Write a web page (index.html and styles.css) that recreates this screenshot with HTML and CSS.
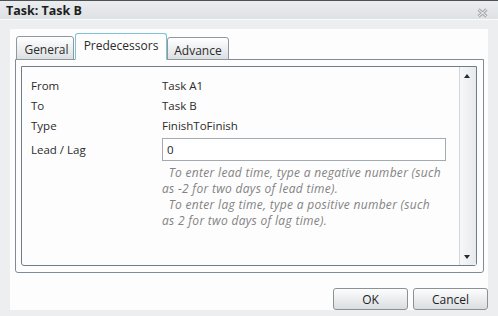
FILE: index.html
```html
<!DOCTYPE html>
<html lang="en">
<head>
    <meta charset="UTF-8">
    <title>Task: Task B</title>
    <link rel="stylesheet" href="styles.css">
</head>
<body>
    <div class="dialog">
        <div class="titlebar">
            <span class="title">Task: Task B</span>
            <svg class="close" width="11" height="10" viewBox="0 0 11 10">
                <path d="M1.5 1.5 L9.5 8.5 M9.5 1.5 L1.5 8.5" stroke="#a9adb1" stroke-width="3" fill="none"/>
                <path d="M1.5 1.5 L9.5 8.5 M9.5 1.5 L1.5 8.5" stroke="#f4f5f6" stroke-width="1" fill="none"/>
            </svg>
        </div>
        <div class="content">
            <div class="panel">
                <div class="tabs">
                    <div class="tab tab-general">General</div>
                    <div class="tab tab-active">Predecessors</div>
                    <div class="tab tab-advance">Advance</div>
                </div>
                <div class="tabpanel">
                    <div class="scrollbox">
                        <div class="fields">
                            <div class="row">
                                <span class="label">From</span>
                                <span class="value">Task A1</span>
                            </div>
                            <div class="row">
                                <span class="label">To</span>
                                <span class="value">Task B</span>
                            </div>
                            <div class="row">
                                <span class="label">Type</span>
                                <span class="value">FinishToFinish</span>
                            </div>
                            <div class="row row-input">
                                <span class="label">Lead / Lag</span>
                                <input class="lag-input" type="text" value="0">
                            </div>
                            <div class="hint">
                                &nbsp;&nbsp;To enter lead time, type a negative number (such<br>
                                as -2 for two days of lead time).<br>
                                &nbsp;&nbsp;To enter lag time, type a positive number (such<br>
                                as 2 for two days of lag time).
                            </div>
                        </div>
                        <div class="scrollbar">
                            <span class="arrow arrow-up"></span>
                            <span class="arrow arrow-down"></span>
                        </div>
                    </div>
                </div>
                <div class="actions">
                    <button class="btn">OK</button>
                    <button class="btn">Cancel</button>
                </div>
            </div>
        </div>
    </div>
</body>
</html>
```

FILE: styles.css
```css
body {
    margin: 0;
    font-family: "Segoe UI", "Open Sans", sans-serif;
    font-size: 11.5px;
    color: #2b2b2b;
}
.dialog {
    width: 498px;
    height: 316px;
    background: #eceef0;
    border-top: 1px solid #4e5256;
    box-sizing: border-box;
}
.titlebar {
    height: 17px;
    display: flex;
    align-items: center;
    justify-content: space-between;
    padding: 1px 10px 0 6px;
    background: linear-gradient(#eaecee, #dfe2e5);
    border-bottom: 1px solid #fbfbfc;
}
.title {
    font-weight: bold;
    font-size: 12.5px;
    color: #1e1e1e;
}
.close {
    margin-top: 5px;
}
.content {
    padding: 9px 10px 0 10px;
}
.panel {
    height: 281px;
    background: #fdfdfd;
    padding: 4px 0 0 5px;
    box-sizing: border-box;
}
.tabs {
    display: flex;
    align-items: flex-end;
    height: 27px;
    margin-bottom: -1px;
    padding-left: 1px;
    position: relative;
    z-index: 1;
}
.tab {
    box-sizing: border-box;
    height: 24px;
    padding-top: 4px;
    text-align: center;
    border: 1px solid #8d98a1;
    border-radius: 3px 3px 0 0;
    background: linear-gradient(#ffffff, #dcdfe2);
    font-size: 12px;
}
.tab-general {
    width: 58px;
    margin-right: 1px;
    padding-left: 3px;
}
.tab-active {
    width: 92px;
    height: 27px;
    padding-top: 3px;
    background: #fdfdfd;
    border-color: #7cc3d3;
    border-bottom: 1px solid #fdfdfd;
}
.tab-advance {
    width: 62px;
    height: 23px;
}
.tabpanel {
    width: 469px;
    height: 214px;
    box-sizing: border-box;
    border: 1px solid #7f8c96;
    border-radius: 0 0 3px 3px;
    padding: 6px 6px 6px 5px;
}
.scrollbox {
    height: 200px;
    box-sizing: border-box;
    border: 1px solid #6f7d88;
    border-radius: 0 0 3px 3px;
    display: flex;
}
.fields {
    flex: 1;
    padding: 8px 0 0 9px;
}
.row {
    display: flex;
    align-items: center;
    height: 20px;
}
.label {
    width: 131px;
}
.row-input {
    height: 24px;
    margin-top: 2px;
}
.lag-input {
    width: 284px;
    height: 23px;
    box-sizing: border-box;
    border: 1px solid #a2abb2;
    padding: 0 4px;
    font-family: inherit;
    font-size: 11.5px;
    color: #222;
    background: #fff;
    outline: none;
}
.hint {
    margin: 4px 0 0 131px;
    font-style: italic;
    font-size: 12px;
    letter-spacing: 0.3px;
    color: #838383;
    line-height: 16px;
    white-space: nowrap;
}
.scrollbar {
    width: 16px;
    border-left: 1px solid #d3d7db;
    background: linear-gradient(90deg, #f6f7f8, #e7eaed);
    position: relative;
}
.arrow {
    position: absolute;
    left: 4px;
    width: 0;
    height: 0;
    border-left: 3.5px solid transparent;
    border-right: 3.5px solid transparent;
}
.arrow-up {
    top: 7px;
    border-bottom: 4px solid #2a2a2a;
}
.arrow-down {
    bottom: 6px;
    border-top: 4px solid #2a2a2a;
}
.actions {
    display: flex;
    justify-content: flex-end;
    gap: 5px;
    margin-top: 15px;
}
.btn {
    width: 75px;
    height: 22px;
    border: 1px solid #8c9196;
    border-radius: 3px;
    background: linear-gradient(#fdfdfd, #dadde0);
    font-family: inherit;
    font-size: 12px;
    color: #1e1e1e;
    padding: 0;
}
```
